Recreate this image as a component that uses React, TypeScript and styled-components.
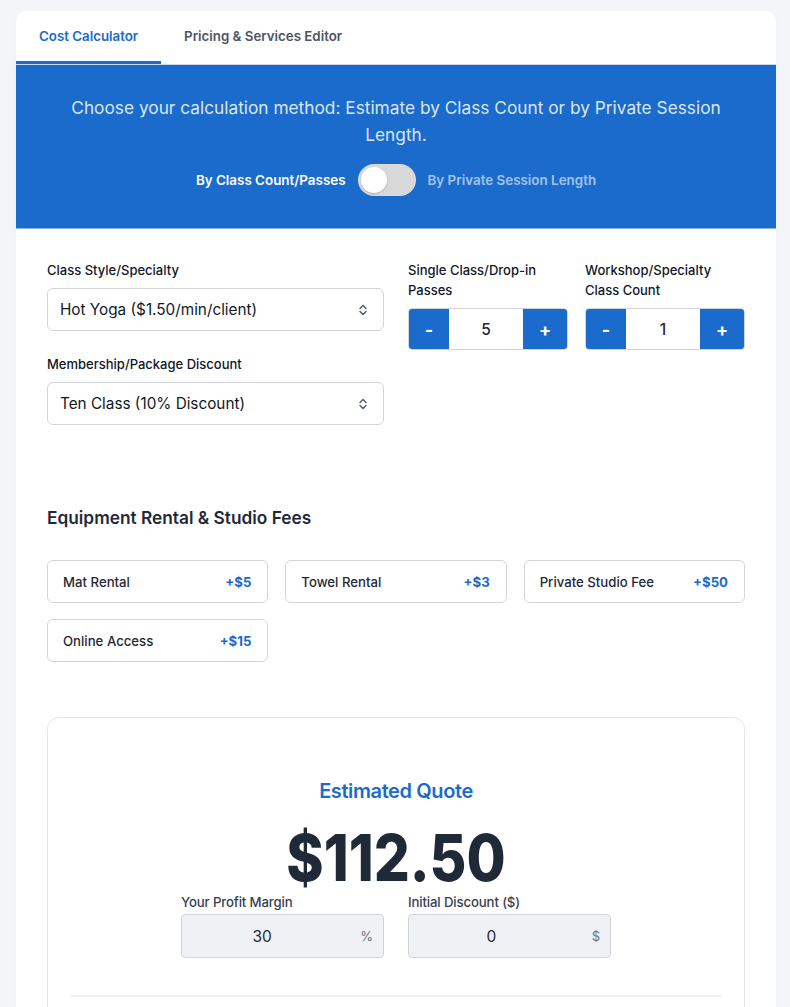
import { useState } from "react";
import styled, { createGlobalStyle } from "styled-components";

const GlobalStyle = createGlobalStyle`
  * { box-sizing: border-box; }
  body {
    margin: 0;
    background: #f4f5f8;
    font-family: Inter, "Noto Sans", sans-serif;
    color: #1f2937;
  }
`;

const Page = styled.div`
  padding: 11px 14px 0 16px;
`;

const Card = styled.div`
  background: #ffffff;
  border-radius: 10px;
  overflow: hidden;
  box-shadow: 0 1px 3px rgba(0, 0, 0, 0.04);
`;

const TabBar = styled.div`
  display: flex;
  border-bottom: 1px solid #c9d8ef;
`;

const Tab = styled.button<{ $active?: boolean }>`
  border: none;
  background: none;
  font-family: inherit;
  font-size: 13.3px;
  font-weight: 600;
  padding: 0 23px;
  height: 53px;
  color: ${(p) => (p.$active ? "#1a6bcc" : "#4b5563")};
  border-bottom: 3px solid ${(p) => (p.$active ? "#1a6bcc" : "transparent")};
  cursor: pointer;
`;

const Banner = styled.div`
  background: #1a6bcc;
  padding: 29px 40px 32px;
  text-align: center;
  border-bottom: 1px solid #8fb3e3;
`;

const BannerText = styled.p`
  margin: 0 auto;
  max-width: 670px;
  font-size: 17.3px;
  line-height: 27px;
  color: rgba(255, 255, 255, 0.85);
`;

const ToggleRow = styled.div`
  display: flex;
  justify-content: center;
  align-items: center;
  gap: 12px;
  margin-top: 16px;
`;

const ToggleLabel = styled.span<{ $on?: boolean }>`
  font-size: 13.4px;
  font-weight: 600;
  color: ${(p) => (p.$on ? "#ffffff" : "rgba(255, 255, 255, 0.6)")};
`;

const Switch = styled.button<{ $on: boolean }>`
  width: 58px;
  height: 32px;
  border-radius: 16px;
  border: none;
  padding: 3px;
  background: #d9d9d9;
  display: flex;
  justify-content: ${(p) => (p.$on ? "flex-end" : "flex-start")};
  cursor: pointer;
`;

const Knob = styled.span`
  width: 26px;
  height: 26px;
  border-radius: 50%;
  background: #ffffff;
  box-shadow: 0 1px 2px rgba(0, 0, 0, 0.2);
`;

const Body = styled.div`
  padding: 31px 31px 0;
`;

const TopGrid = styled.div`
  display: grid;
  grid-template-columns: 1fr 1fr;
  gap: 24px;
`;

const Column = styled.div`
  display: flex;
  flex-direction: column;
  gap: 23px;
`;

const Counters = styled.div`
  display: grid;
  grid-template-columns: 1fr 1fr;
  gap: 17px;
  align-content: start;
`;

const Field = styled.div`
  display: flex;
  flex-direction: column;
  gap: 8px;
`;

const Label = styled.label`
  font-size: 13px;
  font-weight: 500;
  line-height: 20px;
  color: #111827;
`;

const SelectBox = styled.div`
  height: 43px;
  border: 1px solid #d1d5db;
  border-radius: 6px;
  display: flex;
  align-items: center;
  justify-content: space-between;
  padding: 0 14px 0 12px;
  font-size: 15.3px;
  color: #111827;
`;

const Stepper = styled.div`
  display: flex;
  height: 42px;
  border: 1px solid #d1d5db;
  border-radius: 4px;
  overflow: hidden;
`;

const StepButton = styled.button<{ $wide?: boolean }>`
  width: ${(p) => (p.$wide ? "44px" : "40px")};
  border: none;
  background: #1a6bcc;
  color: #ffffff;
  font-family: inherit;
  font-size: 18px;
  font-weight: 700;
  cursor: pointer;
`;

const StepValue = styled.div`
  flex: 1;
  display: flex;
  align-items: center;
  justify-content: center;
  font-size: 15.5px;
  font-weight: 500;
  color: #1f2937;
`;

const SectionTitle = styled.h2`
  margin: 82px 0 0;
  font-size: 17.3px;
  font-weight: 600;
  color: #1f2937;
`;

const FeeGrid = styled.div`
  display: grid;
  grid-template-columns: repeat(3, 1fr);
  gap: 16px 17px;
  margin-top: 32px;
`;

const FeeCard = styled.div`
  height: 43px;
  border: 1px solid #d1d5db;
  border-radius: 6px;
  display: flex;
  align-items: center;
  justify-content: space-between;
  padding: 0 16px 0 15px;
  font-size: 13.2px;
`;

const FeeName = styled.span`
  color: #1f2937;
  font-weight: 500;
`;

const FeePrice = styled.span`
  color: #1a6bcc;
  font-weight: 700;
`;

const QuoteBox = styled.div`
  margin-top: 55px;
  border: 1px solid #e3e5e9;
  border-radius: 12px;
  padding: 61px 23px 0;
  display: flex;
  flex-direction: column;
  align-items: center;
  height: 320px;
`;

const QuoteTitle = styled.div`
  font-size: 20px;
  font-weight: 600;
  color: #1a6bcc;
  letter-spacing: -0.02em;
`;

const QuoteAmount = styled.div`
  margin-top: 28px;
  font-size: 64px;
  font-weight: 800;
  line-height: 54px;
  color: #1f2937;
  transform: scaleX(0.885);
`;

const InputsRow = styled.div`
  display: grid;
  grid-template-columns: 203px 203px;
  gap: 24px;
  margin-top: 9px;
`;

const InputField = styled.div`
  display: flex;
  flex-direction: column;
  gap: 4px;
`;

const SmallLabel = styled.div`
  font-size: 13.2px;
  font-weight: 500;
  color: #374151;
  letter-spacing: -0.01em;
`;

const SuffixInput = styled.div`
  height: 44px;
  background: #eff1f5;
  border: 1px solid #d1d5db;
  border-radius: 4px;
  display: flex;
  align-items: center;
  padding: 0 10px 0 0;
  font-size: 15.5px;
`;

const InputValue = styled.span`
  flex: 1;
  text-align: center;
  padding-right: 18px;
  color: #1f2937;
`;

const Suffix = styled.span`
  font-size: 13px;
  color: #6b7280;
`;

const Divider = styled.hr`
  align-self: stretch;
  margin: 37px 0 0;
  border: none;
  border-top: 2px solid #eceef1;
`;

const Chevrons = () => (
  <svg width="12" height="14" viewBox="0 0 12 14" fill="none" stroke="#4b5563" strokeWidth="1.4" strokeLinecap="round" strokeLinejoin="round">
    <path d="M3 5.5 6 2.5 9 5.5" />
    <path d="M3 8.5 6 11.5 9 8.5" />
  </svg>
);

const fees = [
  { name: "Mat Rental", price: "+$5" },
  { name: "Towel Rental", price: "+$3" },
  { name: "Private Studio Fee", price: "+$50" },
  { name: "Online Access", price: "+$15" },
];

export default function App() {
  const [bySession, setBySession] = useState(false);
  const [passes, setPasses] = useState(5);
  const [workshops, setWorkshops] = useState(1);

  return (
    <Page>
      <GlobalStyle />
      <Card>
        <TabBar>
          <Tab $active>Cost Calculator</Tab>
          <Tab>Pricing &amp; Services Editor</Tab>
        </TabBar>

        <Banner>
          <BannerText>
            Choose your calculation method: Estimate by Class Count or by Private Session Length.
          </BannerText>
          <ToggleRow>
            <ToggleLabel $on={!bySession}>By Class Count/Passes</ToggleLabel>
            <Switch $on={bySession} onClick={() => setBySession((v) => !v)}>
              <Knob />
            </Switch>
            <ToggleLabel $on={bySession}>By Private Session Length</ToggleLabel>
          </ToggleRow>
        </Banner>

        <Body>
          <TopGrid>
            <Column>
              <Field>
                <Label>Class Style/Specialty</Label>
                <SelectBox>
                  Hot Yoga ($1.50/min/client)
                  <Chevrons />
                </SelectBox>
              </Field>
              <Field>
                <Label>Membership/Package Discount</Label>
                <SelectBox>
                  Ten Class (10% Discount)
                  <Chevrons />
                </SelectBox>
              </Field>
            </Column>
            <Counters>
              <Field>
                <Label>Single Class/Drop-in Passes</Label>
                <Stepper>
                  <StepButton onClick={() => setPasses((n) => Math.max(0, n - 1))}>-</StepButton>
                  <StepValue>{passes}</StepValue>
                  <StepButton $wide onClick={() => setPasses((n) => n + 1)}>+</StepButton>
                </Stepper>
              </Field>
              <Field>
                <Label>Workshop/Specialty Class Count</Label>
                <Stepper>
                  <StepButton onClick={() => setWorkshops((n) => Math.max(0, n - 1))}>-</StepButton>
                  <StepValue>{workshops}</StepValue>
                  <StepButton $wide onClick={() => setWorkshops((n) => n + 1)}>+</StepButton>
                </Stepper>
              </Field>
            </Counters>
          </TopGrid>

          <SectionTitle>Equipment Rental &amp; Studio Fees</SectionTitle>
          <FeeGrid>
            {fees.map((f) => (
              <FeeCard key={f.name}>
                <FeeName>{f.name}</FeeName>
                <FeePrice>{f.price}</FeePrice>
              </FeeCard>
            ))}
          </FeeGrid>

          <QuoteBox>
            <QuoteTitle>Estimated Quote</QuoteTitle>
            <QuoteAmount>$112.50</QuoteAmount>
            <InputsRow>
              <InputField>
                <SmallLabel>Your Profit Margin</SmallLabel>
                <SuffixInput>
                  <InputValue>30</InputValue>
                  <Suffix>%</Suffix>
                </SuffixInput>
              </InputField>
              <InputField>
                <SmallLabel>Initial Discount ($)</SmallLabel>
                <SuffixInput>
                  <InputValue>0</InputValue>
                  <Suffix>$</Suffix>
                </SuffixInput>
              </InputField>
            </InputsRow>
            <Divider />
          </QuoteBox>
        </Body>
      </Card>
    </Page>
  );
}
